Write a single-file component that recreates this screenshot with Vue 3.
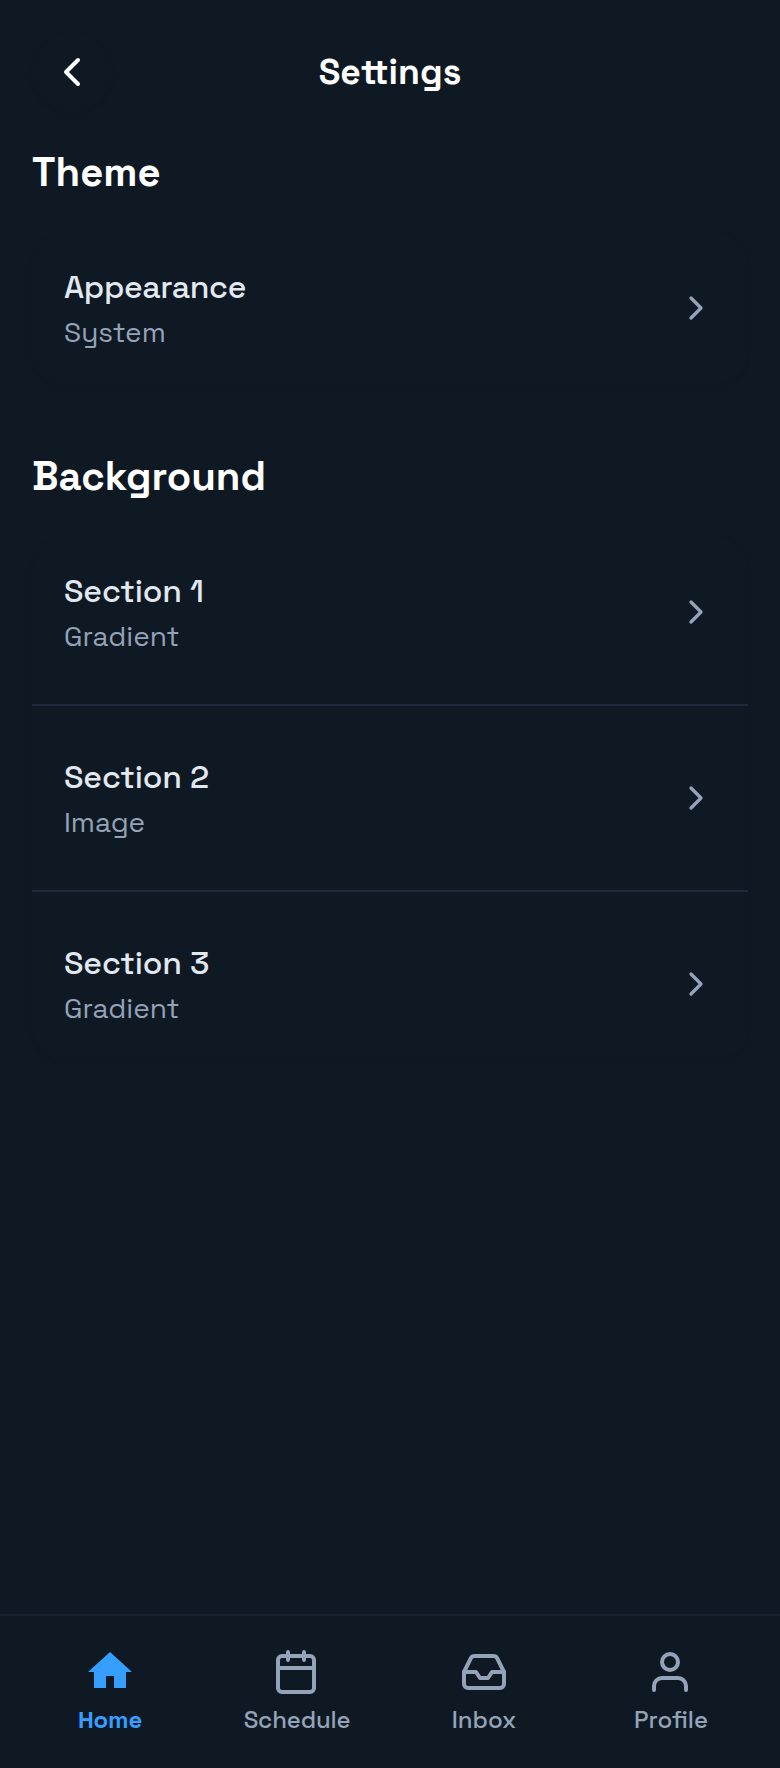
<script setup>
const groups = [
  { title: 'Theme', key: 'theme', rows: [{ title: 'Appearance', value: 'System' }] },
  {
    title: 'Background',
    key: 'background',
    rows: [
      { title: 'Section 1', value: 'Gradient' },
      { title: 'Section 2', value: 'Image' },
      { title: 'Section 3', value: 'Gradient' }
    ]
  }
]
const tabs = ['Home', 'Schedule', 'Inbox', 'Profile']
</script>

<template>
  <div class="screen">
    <header class="header">
      <button class="back" aria-label="Back">
        <svg class="icon" viewBox="0 0 24 24"><polyline points="15 18 9 12 15 6" /></svg>
      </button>
      <h1 class="title">Settings</h1>
    </header>

    <main class="content">
      <section v-for="g in groups" :key="g.key" class="group" :class="g.key">
        <h2 class="heading">{{ g.title }}</h2>
        <div class="card">
          <template v-for="(r, i) in g.rows" :key="r.title">
            <div v-if="i" class="divider"></div>
            <div class="row">
              <div class="labels">
                <div class="name">{{ r.title }}</div>
                <div class="value">{{ r.value }}</div>
              </div>
              <svg class="chevron" viewBox="0 0 24 24"><polyline points="9 18 15 12 9 6" /></svg>
            </div>
          </template>
        </div>
      </section>
    </main>

    <nav class="tabbar">
      <a v-for="t in tabs" :key="t" class="tab" :class="t.toLowerCase()">
        <svg v-if="t === 'Home'" class="icon filled" viewBox="0 0 24 24">
          <path d="M12 2L23 12H20V20H14V14H10V20H4V12H1Z" />
        </svg>
        <svg v-else-if="t === 'Schedule'" class="icon" viewBox="0 0 24 24">
          <rect x="3" y="4" width="18" height="18" rx="2" />
          <path d="M16 2v4M8 2v4M3 10h18" />
        </svg>
        <svg v-else-if="t === 'Inbox'" class="icon" viewBox="0 0 24 24">
          <polyline points="22 12 16 12 14 15 10 15 8 12 2 12" />
          <path d="M5.45 5.11L2 12v6a2 2 0 0 0 2 2h16a2 2 0 0 0 2-2v-6l-3.45-6.89A2 2 0 0 0 16.76 4H7.24a2 2 0 0 0-1.79 1.11z" />
        </svg>
        <svg v-else class="icon" viewBox="0 0 24 24">
          <path d="M20 21v-2a4 4 0 0 0-4-4H8a4 4 0 0 0-4 4v2" />
          <circle cx="12" cy="7" r="4" />
        </svg>
        <span class="label">{{ t }}</span>
      </a>
    </nav>
  </div>
</template>

<style>
body {
  background: #0f1923;
}
</style>

<style scoped>
.screen {
  box-sizing: border-box;
  display: flex;
  flex-direction: column;
  height: 1768px;
  background: #0f1923;
  font-family: "Space Grotesk", Inter, sans-serif;
  color: #fff;
}
svg {
  display: block;
  flex: none;
  fill: none;
  stroke: currentColor;
  stroke-width: 2;
  stroke-linecap: round;
  stroke-linejoin: round;
}
.icon {
  width: 48px;
  height: 48px;
}
.header {
  display: grid;
  grid-template-columns: 80px 1fr 80px;
  align-items: center;
  padding: 32px 32px 0;
}
.back {
  display: flex;
  align-items: center;
  justify-content: center;
  width: 80px;
  height: 80px;
  padding: 0;
  border: 0;
  border-radius: 50%;
  background: #0f1923;
  color: #fff;
  box-shadow: 0 2px 4px rgba(0, 0, 0, 0.05);
}
.title {
  margin: 0;
  text-align: center;
  font-size: 35.6px;
  line-height: 46px;
  font-weight: 700;
}
.content {
  flex: 1;
  padding: 0 32px;
}
.group {
  padding-top: 33px;
}
.heading {
  margin: 0 0 31px;
  height: 56px;
  line-height: 56px;
  font-size: 40px;
  font-weight: 700;
  white-space: nowrap;
}
.group + .group {
  padding-top: 65px;
}
.card {
  border-radius: 32px;
  background: #0f1923;
  box-shadow: 0 2px 4px rgba(0, 0, 0, 0.05);
}
.row {
  box-sizing: border-box;
  display: flex;
  align-items: center;
  justify-content: space-between;
  height: 152px;
  padding: 0 32px;
}
.divider {
  height: 2px;
  margin: 16px 0;
  background: #1e293b;
}
.name {
  color: #e2e8f0;
  font-size: 32px;
  line-height: 48px;
  font-weight: 500;
  letter-spacing: -0.12px;
}
.theme .name {
  letter-spacing: -0.42px;
}
.value {
  color: #94a3b8;
  font-size: 28px;
  line-height: 42px;
  font-weight: 400;
}
.chevron {
  width: 40px;
  height: 40px;
  color: #94a3b8;
}
.tabbar {
  box-sizing: border-box;
  display: grid;
  grid-template-columns: 186px 186px 190px 182px;
  height: 154px;
  padding: 32px 0 0 17px;
  border-top: 2px solid #15212e;
}
.tab {
  display: flex;
  flex-direction: column;
  align-items: center;
  gap: 8px;
  color: #94a3b8;
}
.tab.home {
  color: #359eff;
}
.filled {
  fill: currentColor;
  stroke: none;
}
.label {
  font-size: 24px;
  line-height: 32px;
  font-weight: 500;
}
.home .label {
  font-weight: 700;
  letter-spacing: -0.15px;
}
.schedule .label {
  margin-left: 2px;
  letter-spacing: -0.15px;
}
.profile .label {
  margin-left: 2px;
}
</style>
